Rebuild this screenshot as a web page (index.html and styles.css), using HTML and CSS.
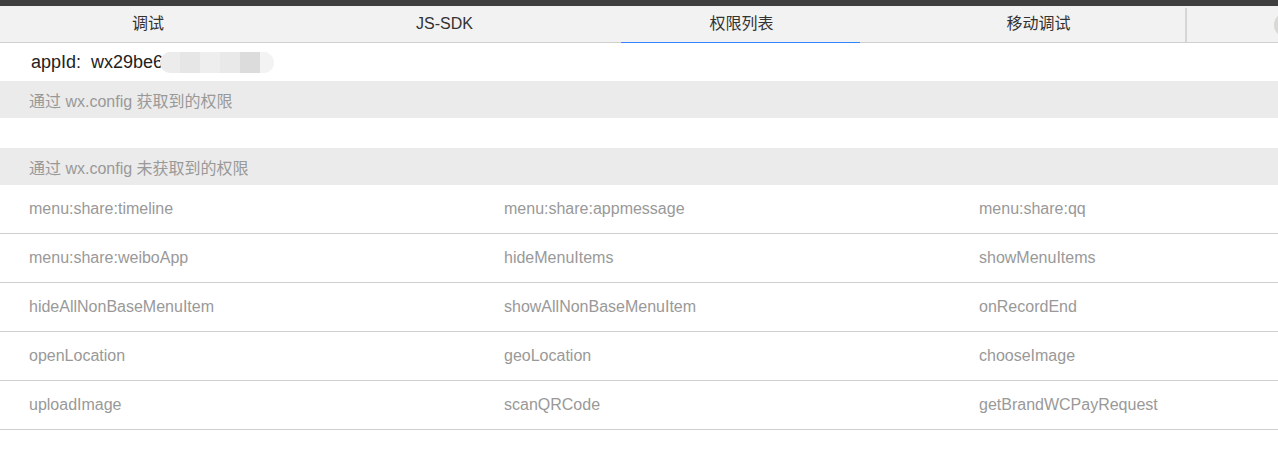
FILE: index.html
```html
<!DOCTYPE html>
<html lang="zh-CN">
<head>
<meta charset="utf-8">
<title>权限列表</title>
<link rel="stylesheet" href="styles.css">
</head>
<body>
<div class="topbar"></div>
<nav class="tabs">
  <div class="tab"><span class="tab-label">调试</span></div>
  <div class="tab"><span class="tab-label">JS-SDK</span></div>
  <div class="tab active"><span class="tab-label">权限列表</span></div>
  <div class="tab"><span class="tab-label">移动调试</span></div>
  <div class="tab-extra"><span class="avatar"></span></div>
</nav>
<div class="appid">
  <span class="appid-text">appId:&nbsp; wx29be6</span><span class="mask"><i></i><i></i><i></i><i></i><i></i><i></i></span>
</div>
<div class="section-head">通过 wx.config 获取到的权限</div>
<div class="gap"></div>
<div class="section-head">通过 wx.config 未获取到的权限</div>
<div class="list">
  <div class="row"><span>menu:share:timeline</span><span>menu:share:appmessage</span><span>menu:share:qq</span></div>
  <div class="row"><span>menu:share:weiboApp</span><span>hideMenuItems</span><span>showMenuItems</span></div>
  <div class="row"><span>hideAllNonBaseMenuItem</span><span>showAllNonBaseMenuItem</span><span>onRecordEnd</span></div>
  <div class="row"><span>openLocation</span><span>geoLocation</span><span>chooseImage</span></div>
  <div class="row"><span>uploadImage</span><span>scanQRCode</span><span>getBrandWCPayRequest</span></div>
</div>
</body>
</html>
```
FILE: styles.css
```css
* { box-sizing: border-box; }
html, body { margin: 0; padding: 0; background: #fff; overflow: hidden; }
body {
  font-family: "Liberation Sans", Arial, "Noto Sans CJK SC", sans-serif;
  font-size: 16px;
  color: #333;
  width: 1278px;
}
.topbar { height: 6px; background: #3f3f3f; }
.tabs {
  display: flex;
  height: 37px;
  background: #f2f2f2;
  border-bottom: 1px solid #cfcfcf;
}
.tab {
  width: 297px;
  flex: none;
  display: flex;
  justify-content: center;
  align-items: center;
  position: relative;
  color: #333;
}
.tab:first-child { width: 296px; }
.tab.active::after {
  content: "";
  position: absolute;
  left: 28px;
  right: 30px;
  bottom: -1px;
  height: 1px;
  background: #3385ff;
}
.tab-label { line-height: 36px; }
.tab-extra {
  flex: 1;
  border-left: 2px solid #d6d6d6;
  margin: 2px 0 0 -2px;
  display: flex;
  align-items: center;
  overflow: hidden;
  position: relative;
}
.avatar {
  width: 24px;
  height: 24px;
  border-radius: 50%;
  background: #d8d8d6;
  margin-left: 87px;
  flex: none;
}
.appid {
  height: 38px;
  display: flex;
  align-items: center;
  padding-left: 31px;
}
.appid-text { color: #222; font-size: 18px; }
.mask {
  display: inline-flex;
  width: 114px;
  height: 21px;
  border-radius: 11px;
  overflow: hidden;
  margin-left: -3px;
  background: #f3f3f3;
}
.mask i { display: block; height: 100%; }
.mask i:nth-child(1) { width: 20px; background: #ececec; }
.mask i:nth-child(2) { width: 20px; background: #e6e6e6; }
.mask i:nth-child(3) { width: 20px; background: #eeeeee; }
.mask i:nth-child(4) { width: 20px; background: #e9e9e9; }
.mask i:nth-child(5) { width: 20px; background: #dcdcdc; }
.mask i:nth-child(6) { width: 14px; background: #f3f3f3; }
.section-head {
  height: 37px;
  background: #ebebeb;
  color: #999;
  padding-left: 29px;
  display: flex;
  align-items: center;
}
.gap { height: 30px; }
.row {
  display: grid;
  grid-template-columns: 475px 475px 1fr;
  height: 49px;
  border-bottom: 1px solid #cfcfcf;
  align-items: center;
  color: #999;
}
.row span { padding-left: 29px; line-height: 48px; }
```
